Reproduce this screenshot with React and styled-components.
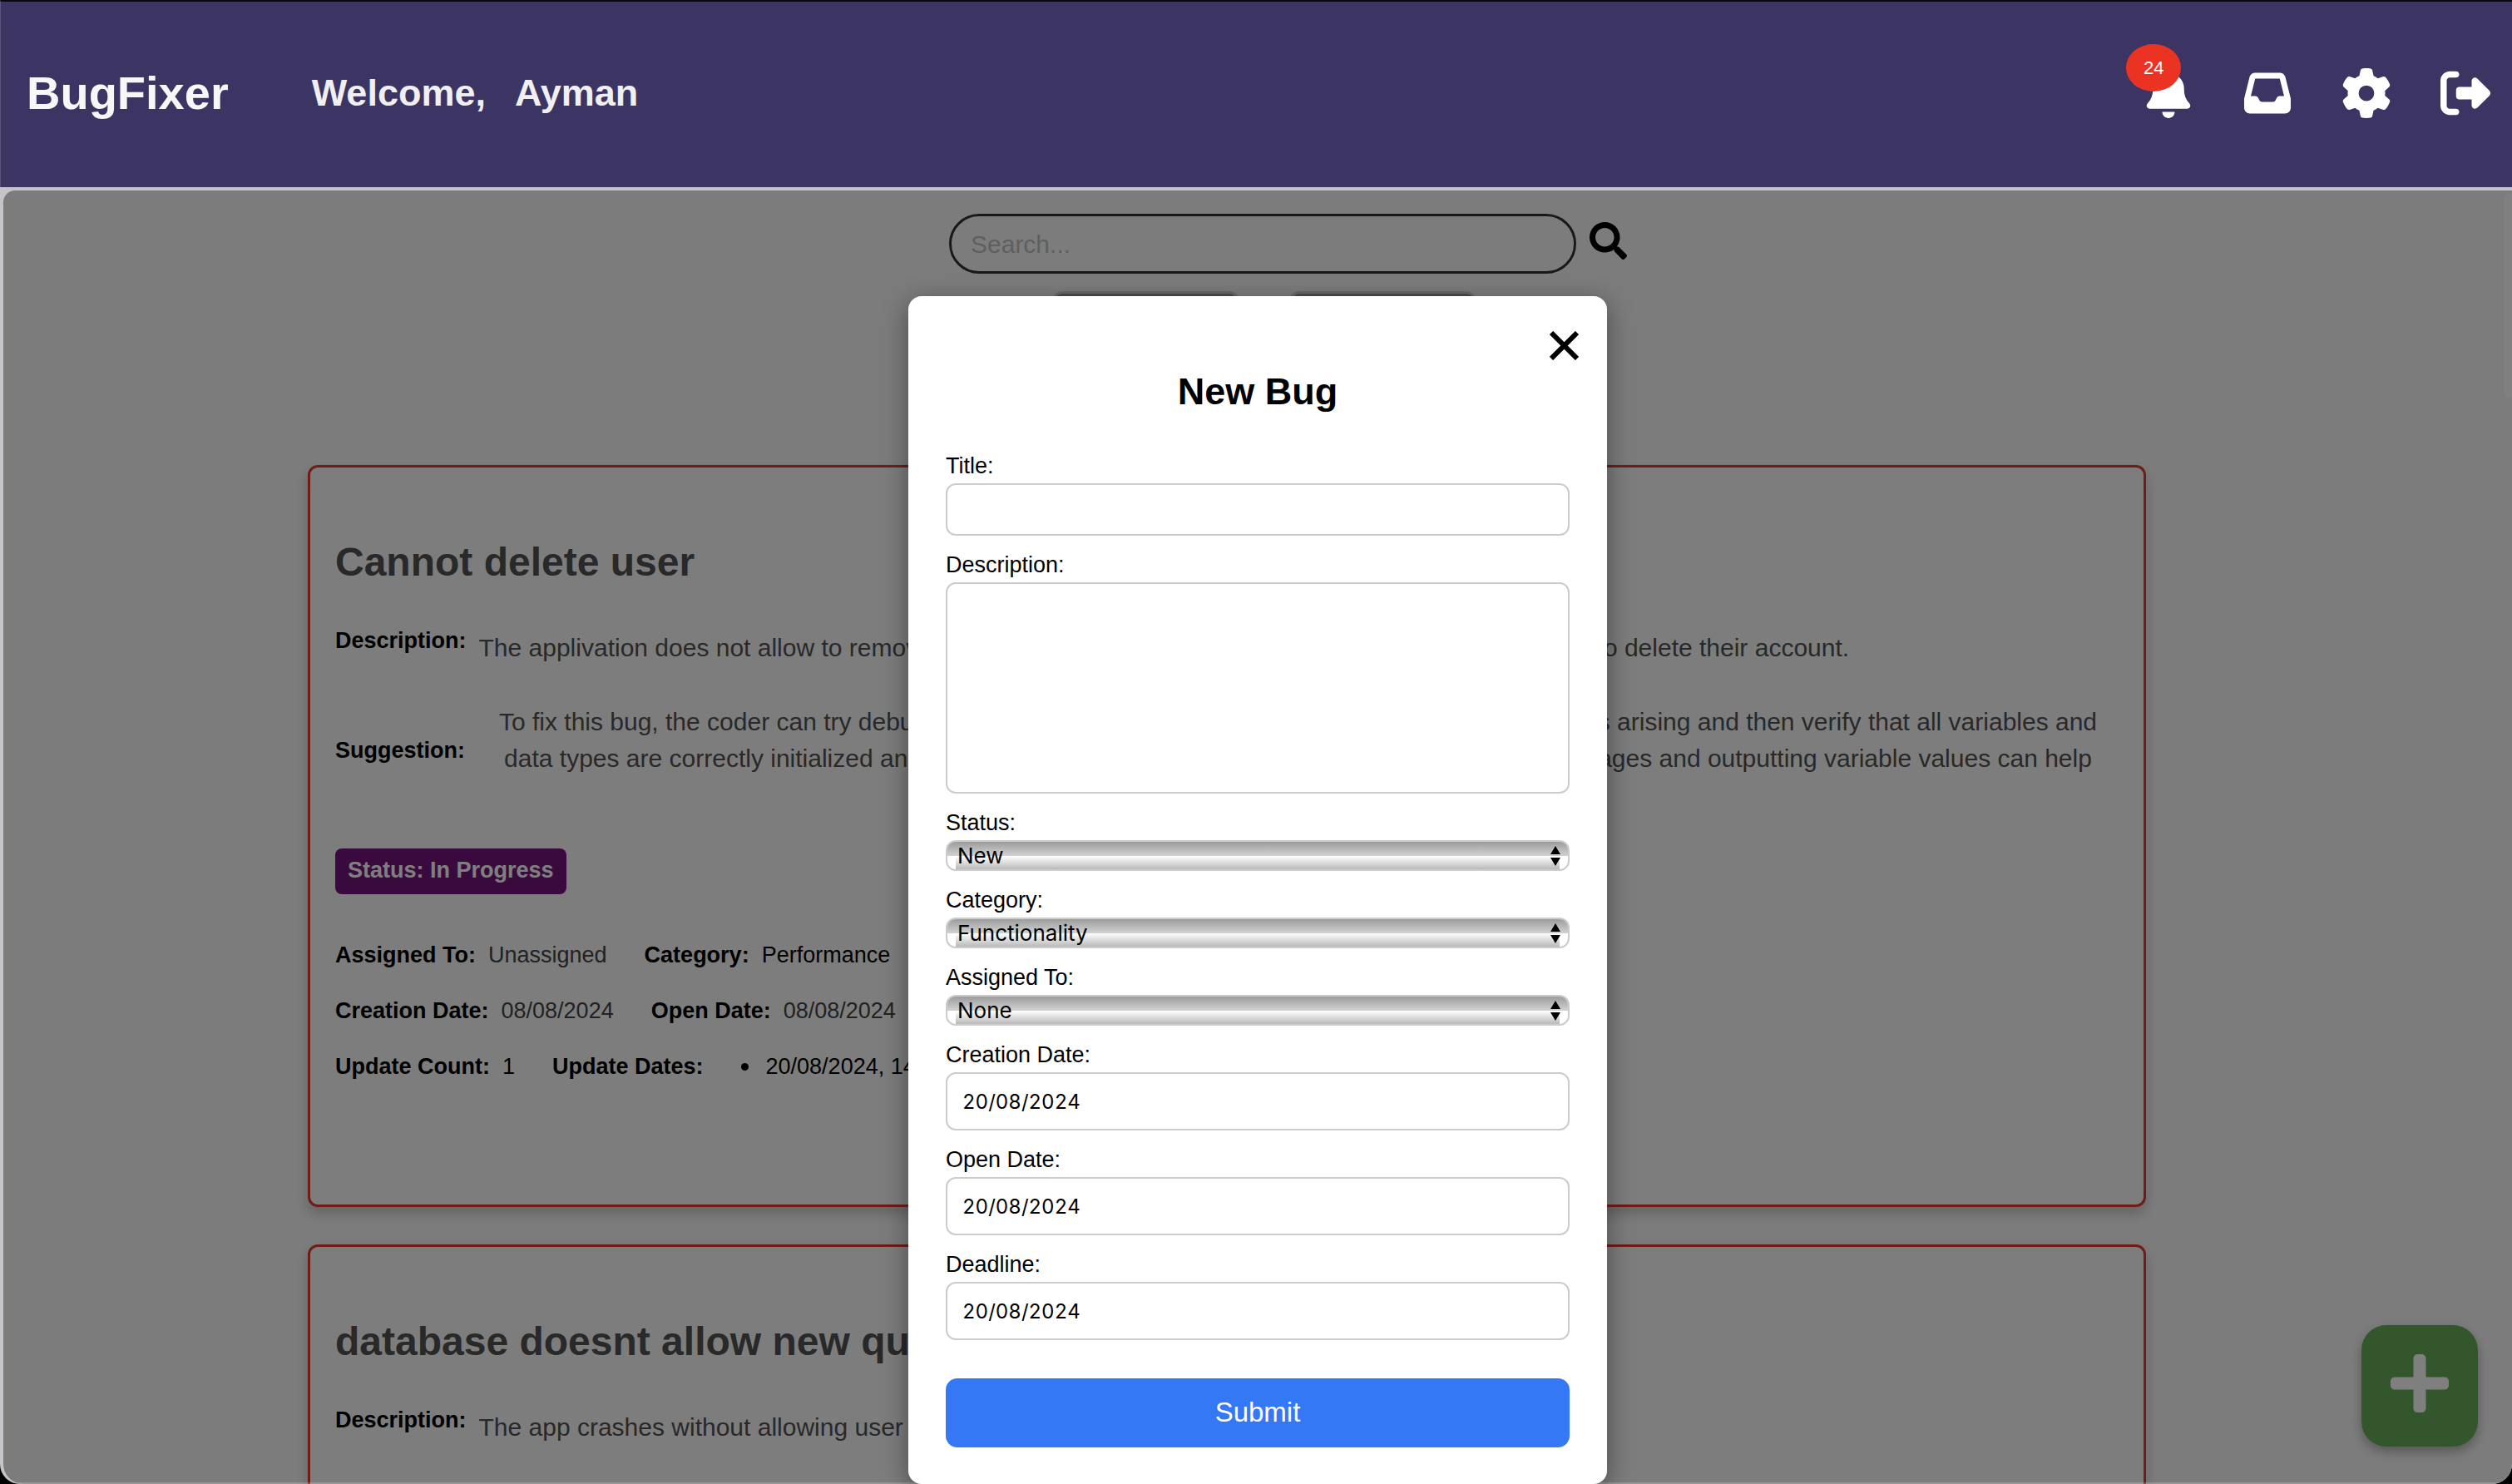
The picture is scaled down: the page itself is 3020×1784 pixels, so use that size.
import React from "react";
import styled, { createGlobalStyle } from "styled-components";
import { FaBell, FaInbox, FaGear, FaRightFromBracket } from "react-icons/fa6";
import { FaSearch, FaPlus } from "react-icons/fa";

const GlobalStyle = createGlobalStyle`
  *, *::before, *::after { box-sizing: border-box; }
  html, body, #root { height: 100%; }
  body {
    margin: 0;
    background: #000;
    color: #000;
    font-family: "Liberation Sans", Helvetica, Arial, sans-serif;
    font-size: 27px;
    line-height: 32px;
    overflow: hidden;
  }
  h1, h2, p, dl, dd, ul { margin: 0; padding: 0; }
  button, input, select, textarea { font: inherit; margin: 0; }
  button { border: 0; padding: 0; background: none; cursor: pointer; }
`;

const Shell = styled.div`
  display: flex;
  flex-direction: column;
  height: 100vh;
  overflow: hidden;
  background: #c6c3c9;
  border-radius: 0 0 24px 24px;
`;

const Header = styled.header`
  flex: none;
  display: flex;
  align-items: center;
  gap: 100px;
  height: 225px;
  padding: 0 26px 4px 31px;
  background: #3c3563;
  border-top: 2px solid #08070d;
  border-left: 1px solid #5b557b;
  color: #f7f7f7;
`;

const Brand = styled.h1`
  font-size: 56px;
  line-height: 64px;
`;

const Welcome = styled.p`
  display: flex;
  gap: 35px;
  font-size: 45px;
  line-height: 52px;
  font-weight: bold;
  color: #f0eff2;
`;

const HeaderActions = styled.nav`
  display: flex;
  align-items: center;
  gap: 59px;
  margin-left: auto;
`;

const IconButton = styled.button`
  position: relative;
  display: flex;
  justify-content: center;
  width: 60px;
  color: #fff;
  font-size: ${(p) => p.$size || 60}px;
`;

const Badge = styled.span`
  position: absolute;
  top: -29px;
  left: -21px;
  padding: 13px 21px;
  border-radius: 50%;
  background: #ea3323;
  font-size: 22px;
  line-height: 31px;
`;

const Panel = styled.main`
  position: relative;
  flex: 1;
  min-height: 0;
  margin: 4px 0 0 4px;
  overflow: hidden;
  background: #f9f9f9;
  border-radius: 14px 0 24px 24px;
`;

const SearchBar = styled.form`
  display: flex;
  align-items: center;
  justify-content: center;
  gap: 16px;
  padding: 28px 0 0 73px;
`;

const SearchInput = styled.input`
  width: 754px;
  height: 72px;
  padding: 2px 23px 0;
  border: 3px solid #333;
  border-radius: 36px;
  background: transparent;
  font-size: 30px;
  &::placeholder { color: #bfbfbf; opacity: 1; }
`;

const SearchButton = styled.button`
  display: flex;
  padding-bottom: 8px;
  font-size: 45px;
`;

const Filters = styled.div`
  display: flex;
  justify-content: center;
  gap: 60px;
  padding: 21px 0 0 16px;
`;

const FilterButton = styled.button`
  width: 225px;
  height: 52px;
  border: 3px solid #d2d2d2;
  border-radius: 12px;
  background: linear-gradient(#969696, #ccc);
`;

const BugList = styled.section`
  display: flex;
  flex-direction: column;
  gap: 45px;
  padding: 157px 440px 0 366px;
`;

const Card = styled.article`
  height: 892px;
  padding: 86px 30px 0;
  border: 3px solid #dc3a2e;
  border-radius: 12px;
  background: #fafafa;
  box-shadow: 0 8px 16px rgba(0, 0, 0, 0.2);
`;

const CardTitle = styled.h2`
  font-size: 48px;
  line-height: 56px;
  color: #525252;
`;

const DetailRow = styled.div`
  display: flex;
  align-items: ${(p) => (p.$centered ? "center" : "flex-start")};
  gap: 15px;
  padding-top: ${(p) => (p.$centered ? 45 : 50)}px;
`;

const DetailText = styled.p`
  flex: 1;
  padding: ${(p) => (p.$centered ? "0 0 24px" : "3px 0 0")};
  font-size: 30px;
  line-height: 44px;
  color: #525252;
  white-space: nowrap;
  text-align: ${(p) => (p.$centered ? "center" : "left")};
  span { display: block; }
`;

const Status = styled.strong`
  display: inline-block;
  margin-top: 62px;
  padding: 10px 15px 13px;
  border-radius: 8px;
  background: #75147c;
  color: #fff;
`;

const MetaList = styled.div`
  display: flex;
  flex-direction: column;
  gap: 35px;
  padding-top: 57px;
`;

const MetaRow = styled.dl`
  display: flex;
  gap: 45px;
`;

const MetaItem = styled.div`
  display: flex;
  gap: 15px;
  dt { font-weight: bold; }
  dd { color: ${(p) => (p.$muted ? "#444" : "#000")}; }
`;

const UpdateDates = styled.ul`
  padding-left: 30px;
  list-style: none;
  li {
    display: flex;
    align-items: center;
    gap: 21px;
  }
  li::before {
    content: "";
    width: 9px;
    height: 9px;
    border-radius: 50%;
    background: currentColor;
  }
`;

const AddButton = styled.button`
  position: absolute;
  right: 41px;
  bottom: 45px;
  display: flex;
  align-items: center;
  justify-content: center;
  width: 140px;
  height: 146px;
  padding-bottom: 7px;
  border-radius: 30px;
  background: #67ad5b;
  color: #fff;
  font-size: 80px;
  box-shadow: 0 6px 14px rgba(0, 0, 0, 0.3);
  svg { width: 70px; }
`;

const Overlay = styled.div`
  position: absolute;
  inset: 0;
  display: flex;
  justify-content: center;
  align-items: flex-start;
  padding-top: 127px;
  background: rgba(0, 0, 0, 0.5);
  box-shadow: inset 0 -2px rgba(255, 255, 255, 0.2);
`;

const Dialog = styled.form`
  position: relative;
  display: flex;
  flex-direction: column;
  gap: 18px;
  width: 840px;
  padding: 89px 45px 44px;
  border-radius: 16px;
  background: #fff;
  box-shadow: 0 8px 32px rgba(0, 0, 0, 0.4);
`;

const CloseButton = styled.button`
  position: absolute;
  top: 42px;
  right: 34px;
  display: flex;
  svg {
    width: 35px;
    height: 35px;
    stroke: #000;
    stroke-width: 6;
  }
`;

const DialogTitle = styled.h2`
  padding-bottom: 28px;
  font-size: 45px;
  line-height: 52px;
  text-align: center;
`;

const Field = styled.div`
  display: flex;
  flex-direction: column;
  gap: 4px;
  label { line-height: 34px; }
`;

const TextInput = styled.input`
  height: ${(p) => (p.$date ? 70 : 63)}px;
  padding: 0 18px;
  border: 2px solid #ccc;
  border-radius: 12px;
  background: #fff;
  font-family: Inter, sans-serif;
  font-size: 24px;
  font-variant-numeric: tabular-nums;
`;

const TextArea = styled.textarea`
  height: 254px;
  padding: 18px;
  border: 2px solid #ccc;
  border-radius: 12px;
  background: #fff;
  resize: none;
`;

const SelectBox = styled.div`
  position: relative;
  display: flex;
`;

const Select = styled.select`
  appearance: none;
  width: 100%;
  height: 37px;
  padding: 0 40px 0 12px;
  border: 2px solid #ccc;
  border-radius: 12px;
  background:
    linear-gradient(#9c9c9c, #d2d2d2) 0 0 / 100% 17px no-repeat,
    linear-gradient(#fff, #b9b9b9) 50% 100% / calc(100% - 20px) 16px no-repeat,
    #fff;
  color: #000;
  font-family: Inter, sans-serif;
  font-size: 26px;
  line-height: 32px;
`;

const Arrows = styled.svg`
  position: absolute;
  top: 7px;
  right: 11px;
  width: 12px;
  height: 24px;
  pointer-events: none;
`;

const Submit = styled.button`
  height: 83px;
  margin-top: 28px;
  padding-bottom: 2px;
  border-radius: 14px;
  background: #3478f6;
  color: #fff;
  font-size: 33px;
`;

const ScrollThumb = styled.div`
  position: absolute;
  top: 4px;
  right: 0;
  width: 10px;
  height: 245px;
  border-radius: 6px 0 0 6px;
  background: #808080;
`;

const bugs = [
  {
    title: "Cannot delete user",
    description:
      "The applivation does not allow to remove user accounts from the data, a problem for users who want to delete their account.",
    suggestion: [
      "To fix this bug, the coder can try debugging the full code step by step to identify where the problem is arising and then verify that all variables and",
      "data types are correctly initialized and used properly in the program. Additionally, writing error messages and outputting variable values can help",
    ],
    status: "In Progress",
  },
  {
    title: "database doesnt allow new queries",
    description: "The app crashes without allowing user to add new queries",
    suggestion: [],
    status: "New",
  },
];

function BugCard({ bug }) {
  return (
    <Card>
      <CardTitle>{bug.title}</CardTitle>
      <DetailRow>
        <strong>Description:</strong>
        <DetailText>{bug.description}</DetailText>
      </DetailRow>
      {bug.suggestion.length > 0 && (
        <>
          <DetailRow $centered>
            <strong>Suggestion:</strong>
            <DetailText $centered>
              {bug.suggestion.map((line) => (
                <span key={line}>{line}</span>
              ))}
            </DetailText>
          </DetailRow>
          <Status>Status: {bug.status}</Status>
          <MetaList>
            <MetaRow>
              <MetaItem $muted><dt>Assigned To:</dt><dd>Unassigned</dd></MetaItem>
              <MetaItem><dt>Category:</dt><dd>Performance</dd></MetaItem>
            </MetaRow>
            <MetaRow>
              <MetaItem $muted><dt>Creation Date:</dt><dd>08/08/2024</dd></MetaItem>
              <MetaItem $muted><dt>Open Date:</dt><dd>08/08/2024</dd></MetaItem>
            </MetaRow>
            <MetaRow>
              <MetaItem><dt>Update Count:</dt><dd>1</dd></MetaItem>
              <MetaItem>
                <dt>Update Dates:</dt>
                <dd><UpdateDates><li>20/08/2024, 14:05</li></UpdateDates></dd>
              </MetaItem>
            </MetaRow>
          </MetaList>
        </>
      )}
    </Card>
  );
}

function SelectField({ id, label, options }) {
  return (
    <Field>
      <label htmlFor={id}>{label}</label>
      <SelectBox>
        <Select id={id}>
          {options.map((o) => <option key={o}>{o}</option>)}
        </Select>
        <Arrows viewBox="0 0 12 24" aria-hidden="true">
          <path d="M6 0l6 10H0zM6 24l6-10H0z" />
        </Arrows>
      </SelectBox>
    </Field>
  );
}

function DateField({ id, label }) {
  return (
    <Field>
      <label htmlFor={id}>{label}</label>
      <TextInput $date id={id} defaultValue="20/08/2024" />
    </Field>
  );
}

export default function App() {
  return (
    <>
      <GlobalStyle />
      <Shell>
        <Header>
          <Brand>BugFixer</Brand>
          <Welcome><span>Welcome,</span><span>Ayman</span></Welcome>
          <HeaderActions>
            <IconButton type="button" aria-label="Notifications">
              <FaBell />
              <Badge>24</Badge>
            </IconButton>
            <IconButton type="button" aria-label="Inbox" $size={56}><FaInbox /></IconButton>
            <IconButton type="button" aria-label="Settings"><FaGear /></IconButton>
            <IconButton type="button" aria-label="Log out"><FaRightFromBracket /></IconButton>
          </HeaderActions>
        </Header>
        <Panel>
          <SearchBar>
            <SearchInput placeholder="Search..." aria-label="Search" />
            <SearchButton type="button" aria-label="Search"><FaSearch /></SearchButton>
          </SearchBar>
          <Filters>
            <FilterButton type="button" aria-label="Filter" />
            <FilterButton type="button" aria-label="Sort" />
          </Filters>
          <BugList>
            {bugs.map((bug) => <BugCard key={bug.title} bug={bug} />)}
          </BugList>
          <AddButton type="button" aria-label="Add bug"><FaPlus /></AddButton>
          <Overlay>
            <ScrollThumb />
            <Dialog aria-label="New Bug">
              <CloseButton type="button" aria-label="Close">
                <svg viewBox="0 0 35 35" aria-hidden="true">
                  <path d="M2 2l31 31M33 2l-31 31" />
                </svg>
              </CloseButton>
              <DialogTitle>New Bug</DialogTitle>
              <Field>
                <label htmlFor="title">Title:</label>
                <TextInput id="title" />
              </Field>
              <Field>
                <label htmlFor="description">Description:</label>
                <TextArea id="description" />
              </Field>
              <SelectField id="status" label="Status:" options={["New", "In Progress"]} />
              <SelectField id="category" label="Category:" options={["Functionality", "Performance"]} />
              <SelectField id="assigned" label="Assigned To:" options={["None"]} />
              <DateField id="creation" label="Creation Date:" />
              <DateField id="open" label="Open Date:" />
              <DateField id="deadline" label="Deadline:" />
              <Submit type="button">Submit</Submit>
            </Dialog>
          </Overlay>
        </Panel>
      </Shell>
    </>
  );
}
